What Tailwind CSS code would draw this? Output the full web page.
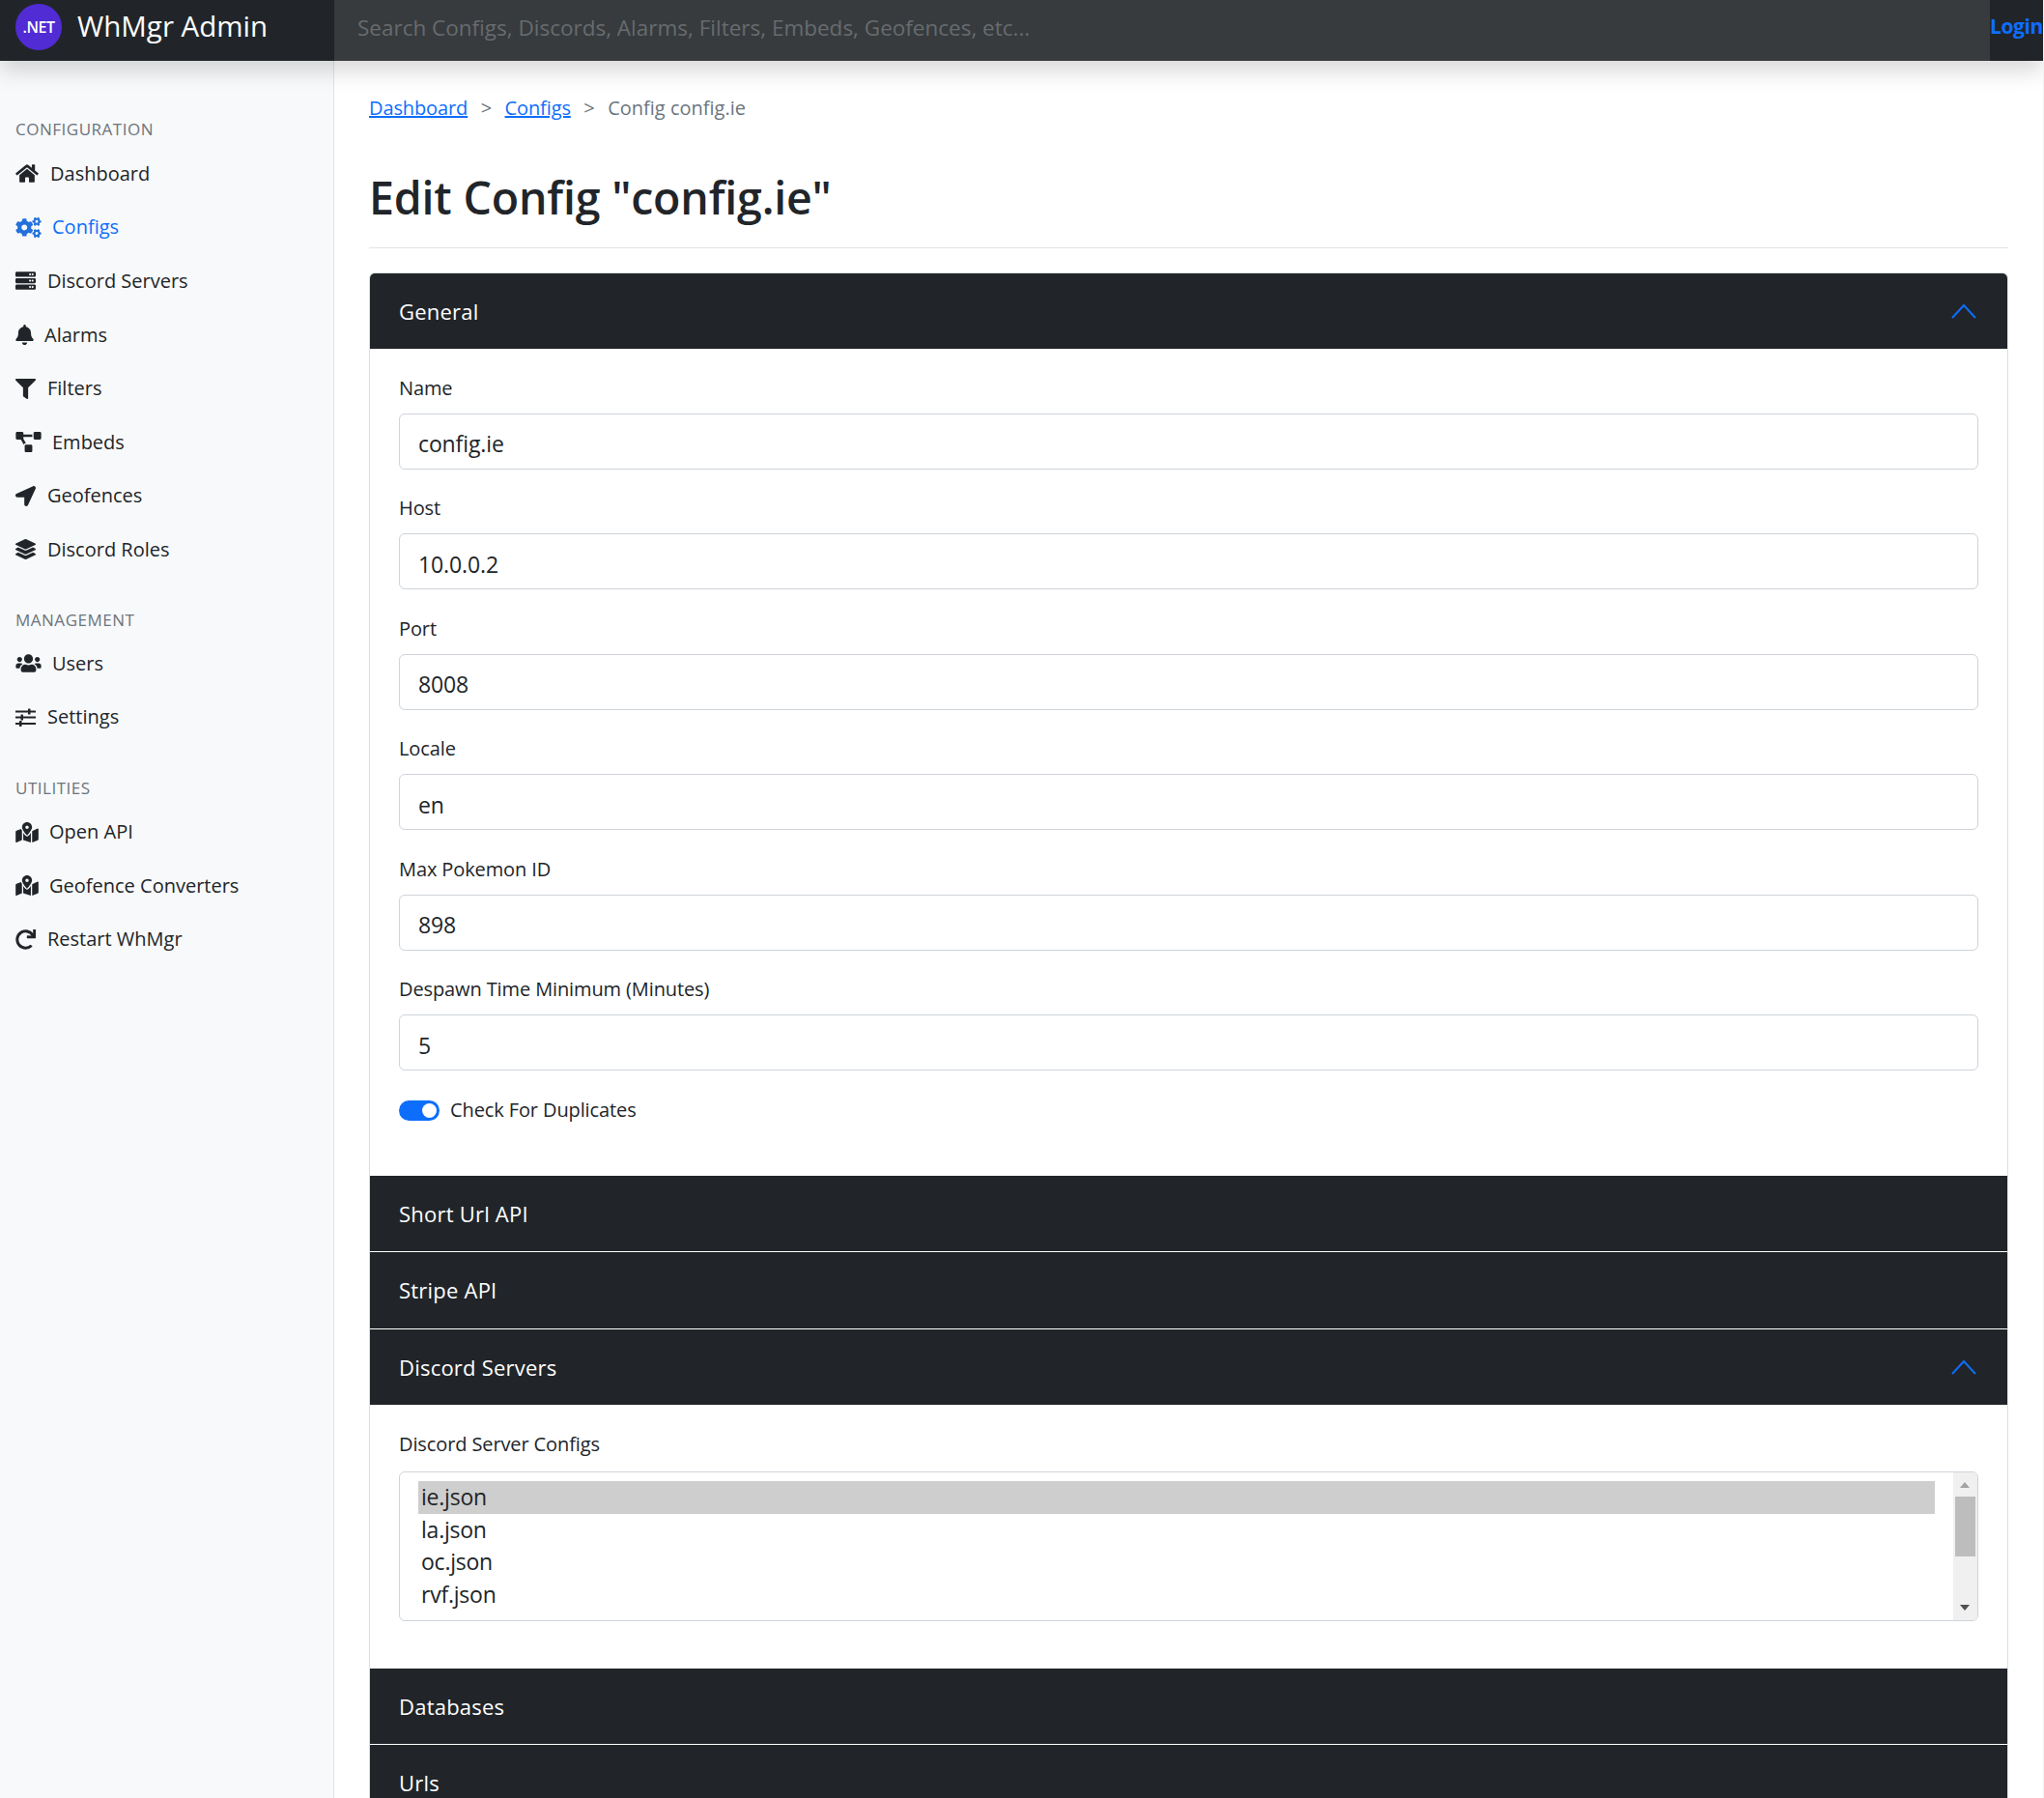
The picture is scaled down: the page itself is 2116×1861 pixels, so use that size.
<!DOCTYPE html>
<html lang="en">
<head>
    <meta charset="UTF-8">
    <meta name="viewport" content="width=device-width, initial-scale=1.0">
    <title>WhMgr Admin</title>
    <script src="https://cdn.jsdelivr.net/npm/@tailwindcss/browser@4"></script>
</head>
<body class="h-screen overflow-hidden flex flex-col bg-white text-[#212529] font-['Open_Sans',sans-serif] border-r border-[#f1f1f3]">
    <!-- Top navbar -->
    <header class="relative z-10 h-[63px] shrink-0 flex bg-[#212529] shadow-[0_11px_22px_rgba(0,0,0,0.15)]">
        <div class="w-[346px] shrink-0 flex items-center pl-4 pb-[7px] gap-[16px]">
            <div class="w-12 h-12 rounded-full bg-[#512bd4] flex items-center justify-center text-white text-[16px] font-semibold tracking-[-0.03em]">.NET</div>
            <span class="text-white text-[29.5px] -mt-[2px]">WhMgr Admin</span>
        </div>
        <input class="flex-1 min-w-0 bg-white/10 px-6 pb-[6px] text-[22.5px] placeholder:text-white/25 outline-none" placeholder="Search Configs, Discords, Alarms, Filters, Embeds, Geofences, etc...">
        <a href="#" class="w-[55px] shrink-0 flex items-center pb-[8px] text-[#0d6efd] text-[21px] font-bold tracking-[-0.02em] overflow-hidden whitespace-nowrap">Login</a>
    </header>

    <div class="flex flex-1 min-h-0">
        <!-- Sidebar -->
        <aside class="w-[346px] shrink-0 bg-[#f8f9fa] border-r border-[#e2e3e5] text-[20px] pt-[57px]">
            <h6 class="h-[28px] flex items-center px-4 text-[17px] font-medium text-[#6c757d] uppercase tracking-[0.03em]">Configuration</h6>
            <nav class="mt-[4px] flex flex-col">
                <a href="#" class="h-[55.6px] flex items-center px-4 gap-[12px]">
                    <svg class="w-6 h-[21px] fill-[#212529]" viewBox="0 0 576 512"><path d="M280.37 148.26L96 300.11V464a16 16 0 0 0 16 16l112.06-.29a16 16 0 0 0 15.92-16V368a16 16 0 0 1 16-16h64a16 16 0 0 1 16 16v95.64a16 16 0 0 0 16 16.05L464 480a16 16 0 0 0 16-16V300L295.67 148.26a12.19 12.19 0 0 0-15.3 0zM571.6 251.47L488 182.56V44.05a12 12 0 0 0-12-12h-56a12 12 0 0 0-12 12v72.61L318.47 43a48 48 0 0 0-61 0L4.34 251.47a12 12 0 0 0-1.6 16.9l25.5 31A12 12 0 0 0 45.15 301l235.22-193.74a12.19 12.19 0 0 1 15.3 0L530.9 301a12 12 0 0 0 16.9-1.6l25.5-31a12 12 0 0 0-1.7-16.93z"/></svg>
                    <span>Dashboard</span>
                </a>
                <a href="#" class="h-[55.6px] flex items-center px-4 gap-[11px] text-[#0d6efd]">
                    <svg class="w-[27px] h-[21px] fill-[#2470dc]" viewBox="0 0 640 512"><path d="M512.1 191l-8.2 14.3c-3 5.3-9.4 7.5-15.1 5.4-11.8-4.4-22.6-10.7-32.1-18.6-4.6-3.8-5.8-10.5-2.8-15.7l8.2-14.3c-6.9-8-12.3-17.3-15.9-27.4h-16.5c-6 0-11.2-4.3-12.2-10.3-2-12-2.1-24.6 0-37.1 1-6 6.2-10.4 12.2-10.4h16.5c3.6-10.1 9-19.4 15.9-27.4l-8.2-14.3c-3-5.2-1.9-11.9 2.8-15.7 9.5-7.9 20.4-14.2 32.1-18.6 5.7-2.1 12.1.1 15.1 5.4l8.2 14.3c10.5-1.9 21.2-1.9 31.7 0L552 6.3c3-5.3 9.4-7.5 15.1-5.4 11.8 4.4 22.6 10.7 32.1 18.6 4.6 3.8 5.8 10.5 2.8 15.7l-8.2 14.3c6.9 8 12.3 17.3 15.9 27.4h16.5c6 0 11.2 4.3 12.2 10.3 2 12 2.1 24.6 0 37.1-1 6-6.2 10.4-12.2 10.4h-16.5c-3.6 10.1-9 19.4-15.9 27.4l8.2 14.3c3 5.2 1.9 11.9-2.8 15.7-9.5 7.9-20.4 14.2-32.1 18.6-5.7 2.1-12.1-.1-15.1-5.4l-8.2-14.3c-10.4 1.9-21.2 1.9-31.7 0zm-10.5-58.8c38.5 29.6 82.4-14.3 52.8-52.8-38.5-29.7-82.4 14.3-52.8 52.8zM386.3 286.1l33.7 16.8c10.1 5.8 14.5 18.1 10.5 29.1-8.9 24.2-26.4 46.4-42.6 65.8-7.4 8.9-20.2 11.1-30.3 5.3l-29.1-16.8c-16 13.7-34.6 24.6-54.9 31.7v33.6c0 11.6-8.3 21.6-19.7 23.6-24.6 4.2-50.4 4.4-75.9 0-11.5-2-20-11.9-20-23.6V418c-20.3-7.2-38.9-18-54.9-31.7L74 403c-10 5.8-22.9 3.6-30.3-5.3-16.2-19.4-33.3-41.6-42.2-65.7-4-10.9.4-23.2 10.5-29.1l33.3-16.8c-3.9-20.9-3.9-42.4 0-63.4L12 205.8c-10.1-5.8-14.6-18.1-10.5-29 8.9-24.2 26-46.4 42.2-65.8 7.4-8.9 20.2-11.1 30.3-5.3l29.1 16.8c16-13.7 34.6-24.6 54.9-31.7V57.1c0-11.5 8.2-21.5 19.6-23.5 24.6-4.2 50.5-4.4 76-.1 11.5 2 20 11.9 20 23.6v33.6c20.3 7.2 38.9 18 54.9 31.7l29.1-16.8c10-5.8 22.9-3.6 30.3 5.3 16.2 19.4 33.2 41.6 42.1 65.8 4 10.9.1 23.2-10 29.1l-33.7 16.8c3.9 21 3.9 42.5 0 63.5zm-117.6 21.1c59.2-77-28.7-164.9-105.7-105.7-59.2 77 28.7 164.9 105.7 105.7zm243.4 182.7l-8.2 14.3c-3 5.3-9.4 7.5-15.1 5.4-11.8-4.4-22.6-10.7-32.1-18.6-4.6-3.8-5.8-10.5-2.8-15.7l8.2-14.3c-6.9-8-12.3-17.3-15.9-27.4h-16.5c-6 0-11.2-4.3-12.2-10.3-2-12-2.1-24.6 0-37.1 1-6 6.2-10.4 12.2-10.4h16.5c3.6-10.1 9-19.4 15.9-27.4l-8.2-14.3c-3-5.2-1.9-11.9 2.8-15.7 9.5-7.9 20.4-14.2 32.1-18.6 5.7-2.1 12.1.1 15.1 5.4l8.2 14.3c10.5-1.9 21.2-1.9 31.7 0l8.2-14.3c3-5.3 9.4-7.5 15.1-5.4 11.8 4.4 22.6 10.7 32.1 18.6 4.6 3.8 5.8 10.5 2.8 15.7l-8.2 14.3c6.9 8 12.3 17.3 15.9 27.4h16.5c6 0 11.2 4.3 12.2 10.3 2 12 2.1 24.6 0 37.1-1 6-6.2 10.4-12.2 10.4h-16.5c-3.6 10.1-9 19.4-15.9 27.4l8.2 14.3c3 5.2 1.9 11.9-2.8 15.7-9.5 7.9-20.4 14.2-32.1 18.6-5.7 2.1-12.1-.1-15.1-5.4l-8.2-14.3c-10.4 1.9-21.2 1.9-31.7 0zM501.6 431c38.5 29.6 82.4-14.3 52.8-52.8-38.5-29.6-82.4 14.3-52.8 52.8z"/></svg>
                    <span>Configs</span>
                </a>
                <a href="#" class="h-[55.6px] flex items-center px-4 gap-[12px]">
                    <svg class="w-[21px] h-[21px] fill-[#212529]" viewBox="0 0 512 512"><path d="M480 160H32c-17.673 0-32-14.327-32-32V64c0-17.673 14.327-32 32-32h448c17.673 0 32 14.327 32 32v64c0 17.673-14.327 32-32 32zm-48-88c-13.255 0-24 10.745-24 24s10.745 24 24 24 24-10.745 24-24-10.745-24-24-24zm-64 0c-13.255 0-24 10.745-24 24s10.745 24 24 24 24-10.745 24-24-10.745-24-24-24zm112 248H32c-17.673 0-32-14.327-32-32v-64c0-17.673 14.327-32 32-32h448c17.673 0 32 14.327 32 32v64c0 17.673-14.327 32-32 32zm-48-88c-13.255 0-24 10.745-24 24s10.745 24 24 24 24-10.745 24-24-10.745-24-24-24zm-64 0c-13.255 0-24 10.745-24 24s10.745 24 24 24 24-10.745 24-24-10.745-24-24-24zm112 248H32c-17.673 0-32-14.327-32-32v-64c0-17.673 14.327-32 32-32h448c17.673 0 32 14.327 32 32v64c0 17.673-14.327 32-32 32zm-48-88c-13.255 0-24 10.745-24 24s10.745 24 24 24 24-10.745 24-24-10.745-24-24-24zm-64 0c-13.255 0-24 10.745-24 24s10.745 24 24 24 24-10.745 24-24-10.745-24-24-24z"/></svg>
                    <span>Discord Servers</span>
                </a>
                <a href="#" class="h-[55.6px] flex items-center px-4 gap-[11px]">
                    <svg class="w-[19px] h-[21px] fill-[#212529]" viewBox="0 0 448 512"><path d="M224 512c35.32 0 63.97-28.65 63.97-64H160.03c0 35.35 28.65 64 63.97 64zm215.39-149.71c-19.32-20.76-55.47-51.99-55.47-154.29 0-77.7-54.48-139.9-127.94-155.16V32c0-17.67-14.32-32-31.98-32s-31.98 14.33-31.98 32v20.84C118.56 68.1 64.08 130.3 64.08 208c0 102.3-36.15 133.53-55.47 154.29-6 6.45-8.66 14.16-8.61 21.71.11 16.4 12.98 32 32.1 32h383.8c19.12 0 32-15.6 32.1-32 .05-7.55-2.61-15.27-8.61-21.71z"/></svg>
                    <span>Alarms</span>
                </a>
                <a href="#" class="h-[55.6px] flex items-center px-4 gap-[12px]">
                    <svg class="w-[21px] h-[21px] fill-[#212529]" viewBox="0 0 512 512"><path d="M487.976 0H24.028C2.71 0-8.047 25.866 7.058 40.971L192 225.941V432c0 7.831 3.821 15.17 10.237 19.662l80 55.98C298.02 518.69 320 507.493 320 487.98V225.941l184.947-184.97C520.021 25.896 509.338 0 487.976 0z"/></svg>
                    <span>Filters</span>
                </a>
                <a href="#" class="h-[55.6px] flex items-center px-4 gap-[11px]">
                    <svg class="w-[27px] h-[21px] fill-[#212529]" viewBox="0 0 640 512"><path d="M384 320H256c-17.67 0-32 14.33-32 32v128c0 17.67 14.33 32 32 32h128c17.67 0 32-14.33 32-32V352c0-17.67-14.33-32-32-32zM192 32c0-17.67-14.33-32-32-32H32C14.33 0 0 14.33 0 32v128c0 17.67 14.33 32 32 32h95.72l73.16 128.04C211.98 300.98 232.4 288 256 288h.28L192 175.51V128h224V64H192V32zM608 0H480c-17.67 0-32 14.33-32 32v128c0 17.67 14.33 32 32 32h128c17.67 0 32-14.33 32-32V32c0-17.67-14.33-32-32-32z"/></svg>
                    <span>Embeds</span>
                </a>
                <a href="#" class="h-[55.6px] flex items-center px-4 gap-[12px]">
                    <svg class="w-[21px] h-[21px] fill-[#212529]" viewBox="0 0 512 512"><path d="M444.52 3.52L28.74 195.42c-47.97 22.39-31.98 92.75 19.19 92.75h175.91v175.91c0 51.17 70.36 67.17 92.75 19.19l191.9-415.78c15.99-38.39-25.59-79.97-63.97-63.97z"/></svg>
                    <span>Geofences</span>
                </a>
                <a href="#" class="h-[55.6px] flex items-center px-4 gap-[12px]">
                    <svg class="w-[21px] h-[21px] fill-[#212529]" viewBox="0 0 512 512"><path d="M12.41 148.02l232.94 105.67c6.8 3.09 14.49 3.09 21.29 0l232.94-105.67c16.55-7.51 16.55-32.52 0-40.03L266.65 2.31a25.607 25.607 0 0 0-21.29 0L12.41 107.98c-16.55 7.51-16.55 32.53 0 40.04zm487.18 88.28l-58.09-26.33-161.64 73.27c-7.56 3.43-15.59 5.17-23.86 5.17s-16.29-1.74-23.86-5.17L70.51 209.97l-58.1 26.33c-16.55 7.5-16.55 32.5 0 40l232.94 105.59c6.8 3.08 14.49 3.08 21.29 0L499.59 276.3c16.55-7.5 16.55-32.5 0-40zm0 127.8l-57.87-26.23-161.86 73.37c-7.56 3.43-15.59 5.17-23.86 5.17s-16.29-1.74-23.86-5.17L70.29 337.87 12.41 364.1c-16.55 7.5-16.55 32.5 0 40l232.94 105.59c6.8 3.08 14.49 3.08 21.29 0L499.59 404.1c16.55-7.5 16.55-32.5 0-40z"/></svg>
                    <span>Discord Roles</span>
                </a>
            </nav>

            <h6 class="h-[28px] mt-[31px] flex items-center px-4 text-[17px] font-medium text-[#6c757d] uppercase tracking-[0.03em]">Management</h6>
            <nav class="mt-[3px] flex flex-col">
                <a href="#" class="h-[55.6px] flex items-center px-4 gap-[11px]">
                    <svg class="w-[27px] h-[21px] fill-[#212529]" viewBox="0 0 640 512"><path d="M96 224c35.3 0 64-28.7 64-64s-28.7-64-64-64-64 28.7-64 64 28.7 64 64 64zm448 0c35.3 0 64-28.7 64-64s-28.7-64-64-64-64 28.7-64 64 28.7 64 64 64zm32 32h-64c-17.6 0-33.5 7.1-45.1 18.6 40.3 22.1 68.9 62 75.1 109.4h66c17.7 0 32-14.3 32-32v-32c0-35.3-28.7-64-64-64zm-256 0c61.9 0 112-50.1 112-112S381.9 32 320 32 208 82.1 208 144s50.1 112 112 112zm76.8 32h-8.3c-20.8 10-43.9 16-68.5 16s-47.6-6-68.5-16h-8.3C179.6 288 128 339.6 128 403.2V432c0 26.5 21.5 48 48 48h288c26.5 0 48-21.5 48-48v-28.8c0-63.6-51.6-115.2-115.2-115.2zm-223.7-13.4C161.5 263.1 145.6 256 128 256H64c-35.3 0-64 28.7-64 64v32c0 17.7 14.3 32 32 32h65.9c6.3-47.4 34.9-87.3 75.2-109.4z"/></svg>
                    <span>Users</span>
                </a>
                <a href="#" class="h-[55.6px] flex items-center px-4 gap-[12px]">
                    <svg class="w-[21px] h-[19px]" viewBox="0 0 21 19" fill="#212529"><rect y="2.5" width="21" height="2"/><rect y="8.5" width="21" height="2"/><rect y="15" width="21" height="2"/><rect x="13" y="0.5" width="2.5" height="6" rx=".5"/><rect x="5.5" y="6.5" width="2.5" height="6" rx=".5"/><rect x="4" y="13" width="2.5" height="6" rx=".5"/></svg>
                    <span>Settings</span>
                </a>
            </nav>

            <h6 class="h-[28px] mt-[31.5px] flex items-center px-4 text-[17px] font-medium text-[#6c757d] uppercase tracking-[0.03em]">Utilities</h6>
            <nav class="mt-[4px] flex flex-col">
                <a href="#" class="h-[55.6px] flex items-center px-4 gap-[11px]">
                    <svg class="w-6 h-[21px] fill-[#212529]" viewBox="0 0 576 512"><path d="M288 0c-69.59 0-126 56.41-126 126 0 56.26 82.35 158.8 113.9 196.02 6.39 7.54 17.82 7.54 24.2 0C331.65 284.8 414 182.26 414 126 414 56.41 357.59 0 288 0zm0 168c-23.2 0-42-18.8-42-42s18.8-42 42-42 42 18.8 42 42-18.8 42-42 42zM20.12 215.95A32.006 32.006 0 0 0 0 245.66v250.32c0 11.32 11.43 19.06 21.94 14.86L160 448V214.92c-8.84-15.98-16.07-31.54-21.25-46.42L20.12 215.95zM288 359.67c-14.07 0-27.38-6.18-36.51-16.96-19.66-23.2-40.57-49.62-59.49-76.72V448l192 64V266c-18.92 27.09-39.82 53.52-59.49 76.72-9.13 10.77-22.44 16.95-36.51 16.95zm266.06-198.51L416 224v288l139.88-55.95A31.996 31.996 0 0 0 576 426.34V176.02c0-11.32-11.43-19.06-21.94-14.86z"/></svg>
                    <span>Open API</span>
                </a>
                <a href="#" class="h-[55.6px] flex items-center px-4 gap-[11px]">
                    <svg class="w-6 h-[21px] fill-[#212529]" viewBox="0 0 576 512"><path d="M288 0c-69.59 0-126 56.41-126 126 0 56.26 82.35 158.8 113.9 196.02 6.39 7.54 17.82 7.54 24.2 0C331.65 284.8 414 182.26 414 126 414 56.41 357.59 0 288 0zm0 168c-23.2 0-42-18.8-42-42s18.8-42 42-42 42 18.8 42 42-18.8 42-42 42zM20.12 215.95A32.006 32.006 0 0 0 0 245.66v250.32c0 11.32 11.43 19.06 21.94 14.86L160 448V214.92c-8.84-15.98-16.07-31.54-21.25-46.42L20.12 215.95zM288 359.67c-14.07 0-27.38-6.18-36.51-16.96-19.66-23.2-40.57-49.62-59.49-76.72V448l192 64V266c-18.92 27.09-39.82 53.52-59.49 76.72-9.13 10.77-22.44 16.95-36.51 16.95zm266.06-198.51L416 224v288l139.88-55.95A31.996 31.996 0 0 0 576 426.34V176.02c0-11.32-11.43-19.06-21.94-14.86z"/></svg>
                    <span>Geofence Converters</span>
                </a>
                <a href="#" class="h-[55.6px] flex items-center px-4 gap-[12px]">
                    <svg class="w-[21px] h-[21px] fill-[#212529]" viewBox="0 0 512 512"><path d="M500.33 0h-47.41a12 12 0 0 0-12 12.57l4 82.76A247.42 247.42 0 0 0 256 8C119.34 8 7.9 119.53 8 256.19 8.1 393.07 119.1 504 256 504a247.1 247.1 0 0 0 166.18-63.91 12 12 0 0 0 .48-17.43l-34-34a12 12 0 0 0-16.38-.55A176 176 0 1 1 402.1 157.8l-101.53-4.87a12 12 0 0 0-12.57 12v47.41a12 12 0 0 0 12 12h200.33a12 12 0 0 0 12-12V12a12 12 0 0 0-12-12z"/></svg>
                    <span>Restart WhMgr</span>
                </a>
            </nav>
        </aside>

        <!-- Main content -->
        <main class="flex-1 min-w-0 px-[36px] tracking-[-0.007em]">
            <ol class="flex items-center h-[26px] mt-[36px] text-[20px] text-[#6c757d]">
                <li><a href="#" class="text-[#0d6efd] underline">Dashboard</a></li>
                <li class="px-[13.5px]">&gt;</li>
                <li><a href="#" class="text-[#0d6efd] underline">Configs</a></li>
                <li class="px-[13.5px]">&gt;</li>
                <li class="tracking-normal">Config config.ie</li>
            </ol>
            <h1 class="mt-[46px] h-[66px] text-[46.5px] leading-[66px] font-semibold tracking-[-0.004em]">Edit Config "config.ie"</h1>
            <hr class="mt-[19px] border-[#e3e4e6]">

            <div class="mt-[25px] border-x border-t border-[#dcdee0] rounded-t-[6px] overflow-hidden">
                <!-- General -->
                <div class="h-[78px] bg-[#212529] text-white text-[22px] tracking-[0.01em] flex items-center justify-between pl-[30px] pr-[32px]">
                    <span>General</span>
                    <svg class="w-[26px] h-[16px]" viewBox="0 0 26 16" fill="none" stroke="#0d6efd" stroke-width="2"><path d="M1 15 13 2l12 13"/></svg>
                </div>
                <div class="px-[30px] pt-[26.5px] h-[856px] text-[20px]">
                    <label class="block h-[28px] leading-[28px]">Name</label>
                    <input value="config.ie" class="mt-[12px] block w-full h-[58px] border border-[#ced4da] rounded-[6px] px-[19px] pt-[5px] text-[23px] tracking-[-0.005em]">
                    <label class="block h-[28px] leading-[28px] mt-[26.5px]">Host</label>
                    <input value="10.0.0.2" class="mt-[12px] block w-full h-[58px] border border-[#ced4da] rounded-[6px] px-[19px] pt-[5px] text-[23px] tracking-[-0.005em]">
                    <label class="block h-[28px] leading-[28px] mt-[26.5px]">Port</label>
                    <input value="8008" class="mt-[12px] block w-full h-[58px] border border-[#ced4da] rounded-[6px] px-[19px] pt-[5px] text-[23px] tracking-[-0.005em]">
                    <label class="block h-[28px] leading-[28px] mt-[26.5px]">Locale</label>
                    <input value="en" class="mt-[12px] block w-full h-[58px] border border-[#ced4da] rounded-[6px] px-[19px] pt-[5px] text-[23px] tracking-[-0.005em]">
                    <label class="block h-[28px] leading-[28px] mt-[26.5px]">Max Pokemon ID</label>
                    <input value="898" class="mt-[12px] block w-full h-[58px] border border-[#ced4da] rounded-[6px] px-[19px] pt-[5px] text-[23px] tracking-[-0.005em]">
                    <label class="block h-[28px] leading-[28px] mt-[26.5px]">Despawn Time Minimum (Minutes)</label>
                    <input value="5" class="mt-[12px] block w-full h-[58px] border border-[#ced4da] rounded-[6px] px-[19px] pt-[5px] text-[23px] tracking-[-0.005em]">
                    <div class="mt-[26px] flex items-center gap-[11px]">
                        <span class="w-[42px] h-[21px] rounded-full bg-[#0d6efd] flex items-center justify-end pr-[3px]"><span class="w-[15px] h-[15px] rounded-full bg-white"></span></span>
                        <span>Check For Duplicates</span>
                    </div>
                </div>

                <div class="h-[78px] bg-[#212529] text-white text-[22px] tracking-[0.01em] flex items-center pl-[30px]">Short Url API</div>
                <div class="h-[81px] bg-[#212529] border-y border-white text-white text-[22px] tracking-[0.01em] flex items-center pl-[30px]">Stripe API</div>

                <!-- Discord Servers -->
                <div class="h-[78px] bg-[#212529] text-white text-[22px] tracking-[0.01em] flex items-center justify-between pl-[30px] pr-[32px]">
                    <span>Discord Servers</span>
                    <svg class="w-[26px] h-[16px]" viewBox="0 0 26 16" fill="none" stroke="#0d6efd" stroke-width="2"><path d="M1 15 13 2l12 13"/></svg>
                </div>
                <div class="px-[30px] pt-[27px] h-[273px] text-[20px]">
                    <label class="block h-[28px] leading-[28px]">Discord Server Configs</label>
                    <div class="mt-[14px] h-[155px] w-[1635px] border border-[#ced4da] rounded-[6px] flex overflow-hidden">
                        <ul class="flex-1 pl-[19px] pr-[19px] pt-[9px] text-[23px] tracking-[-0.01em] leading-[33.7px]">
                            <li class="bg-[#cecece] pl-[3px]">ie.json</li>
                            <li class="pl-[3px]">la.json</li>
                            <li class="pl-[3px]">oc.json</li>
                            <li class="pl-[3px]">rvf.json</li>
                        </ul>
                        <div class="w-[25px] shrink-0 bg-[#f0f0f0] pt-[25px] pl-[2px] relative">
                            <div class="w-[21px] h-[62px] bg-[#bdbdbd]"></div>
                            <span class="absolute left-[7px] top-[10px] w-0 h-0 border-x-[5px] border-x-transparent border-b-[6px] border-b-[#a3a3a3]"></span>
                            <span class="absolute left-[7px] bottom-[10px] w-0 h-0 border-x-[5px] border-x-transparent border-t-[6px] border-t-[#505050]"></span>
                        </div>
                    </div>
                </div>

                <div class="h-[78px] bg-[#212529] text-white text-[22px] tracking-[0.01em] flex items-center pl-[30px]">Databases</div>
                <div class="h-[80px] bg-[#212529] border-t border-white text-white text-[22px] tracking-[0.01em] flex items-center pl-[30px]">Urls</div>
            </div>
        </main>
    </div>
</body>
</html>
